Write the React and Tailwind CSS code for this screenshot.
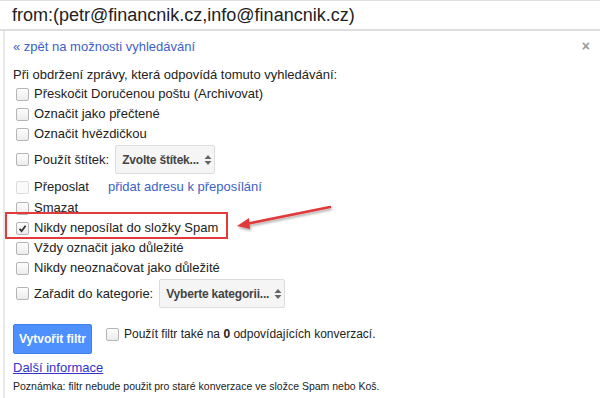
import React from "react";

function Box({ checked, disabled }) {
  return (
    <span
      className={`inline-flex w-[13px] h-[13px] shrink-0 items-center justify-center rounded-[2px] border ${
        disabled ? "border-[#dcdcdc] bg-[#fafafa]" : "border-[#b5b5b5] bg-gradient-to-b from-[#fdfdfd] to-[#ececec]"
      }`}
    >
      {checked && (
        <svg width="9" height="9" viewBox="0 0 9 9">
          <path d="M1.5 4.8 L3.6 7 L7.6 1.8" fill="none" stroke="#333" strokeWidth="1.8" />
        </svg>
      )}
    </span>
  );
}

function Row({ children, checked, disabled, className = "" }) {
  return (
    <div className={`flex items-center gap-[5px] whitespace-nowrap ${className}`}>
      <Box checked={checked} disabled={disabled} />
      {children}
    </div>
  );
}

function Select({ label, w }) {
  return (
    <span
      className={`inline-flex items-center justify-between gap-[5px] h-[29px] ${w} whitespace-nowrap rounded-[2px] border border-[#dcdcdc] bg-[#f5f5f5] pl-[6px] pr-[6px] text-[12px] font-bold text-[#444]`}
    >
      <span className="tracking-[-0.2px]">{label}</span>
      <svg width="8" height="12" viewBox="0 0 8 12" className="shrink-0">
        <path d="M0.5 5 L4 1 L7.5 5 Z" fill="#666" />
        <path d="M0.5 7 L4 11 L7.5 7 Z" fill="#666" />
      </svg>
    </span>
  );
}

export default function App() {
  return (
    <div
      className="relative w-[600px] h-[398px] bg-white overflow-hidden text-[#222]"
      style={{ fontFamily: '"Liberation Sans", Arial, sans-serif' }}
    >
      <div className="h-[31px] border-t border-b-2 border-[#dedede] flex items-center pl-[12px] text-[18px] text-[#222]">
        from:(petr@financnik.cz,info@financnik.cz)
      </div>
      <div className="ml-[3px] border-l-2 border-[#e8e8e8] h-[367px] pl-[8px] text-[13px] relative">
        <div className="flex items-center justify-between pt-[7px] h-[24px]">
          <span className="text-[#3d5fc6]">« zpět na možnosti vyhledávání</span>
          <span className="mr-[10px] text-[#999] text-[14px] font-bold">×</span>
        </div>
        <div className="mt-[12px] leading-[16px]">Při obdržení zprávy, která odpovídá tomuto vyhledávání:</div>
        <div className="mt-[1px] flex flex-col pl-[3px]">
          <Row className="h-[20px]">Přeskočit Doručenou poštu (Archivovat)</Row>
          <Row className="h-[20px]">Označit jako přečtené</Row>
          <Row className="h-[20px]">Označit hvězdičkou</Row>
          <Row className="h-[29px] mt-[1px]">
            Použít štítek:
            <span className="ml-[1px]">
              <Select label="Zvolte štítek..." w="w-[100px]" />
            </span>
          </Row>
          <Row disabled className="h-[20px] mt-[3px]">
            <span>Přeposlat</span>
            <span className="ml-[14px] text-[#3d5fc6]">přidat adresu k přeposílání</span>
          </Row>
          <Row className="h-[20px] mt-[1px]">Smazat</Row>
          <Row checked className="h-[20px]">Nikdy neposílat do složky Spam</Row>
          <Row className="h-[20px]">Vždy označit jako důležité</Row>
          <Row className="h-[20px]">Nikdy neoznačovat jako důležité</Row>
          <Row className="h-[29px] mt-[1px]">
            Zařadit do kategorie:
            <span className="ml-[1px]">
              <Select label="Vyberte kategorii..." w="w-[126px]" />
            </span>
          </Row>
        </div>
        <div className="mt-[16px] flex items-start gap-[14px]">
          <span className="inline-flex items-center justify-center h-[30px] w-[79px] rounded-[2px] bg-[#4d90fe] border border-[#3f7fe8] text-white text-[12px] font-bold">
            Vytvořit filtr
          </span>
          <span className="flex items-center gap-[5px] mt-[1px] text-[12px]">
            <Box />
            <span>
              Použít filtr také na <b className="font-bold">0</b> odpovídajících konverzací.
            </span>
          </span>
        </div>
        <div className="mt-[6px] text-[#3333cc] underline leading-[16px]">Další informace</div>
        <div className="mt-[3px] text-[10.5px] leading-[14px] text-[#222]">
          Poznámka: filtr nebude použit pro staré konverzace ve složce Spam nebo Koš.
        </div>
      </div>
      {/* annotation */}
      <div className="absolute left-[5px] top-[212px] w-[223px] h-[27px] border-[2px] border-[#e23b3b]" />
      <svg className="absolute left-0 top-0" width="600" height="398" viewBox="0 0 600 398">
        <defs>
          <filter id="sh" x="-10%" y="-50%" width="120%" height="200%">
            <feDropShadow dx="1" dy="2" stdDeviation="1" floodColor="#000" floodOpacity="0.3" />
          </filter>
        </defs>
        <g filter="url(#sh)">
          <line x1="330" y1="207" x2="246" y2="224" stroke="#e03a3a" strokeWidth="2.5" strokeLinecap="round" />
          <path d="M237 226 L249 218 L250 229 Z" fill="#e03a3a" />
        </g>
      </svg>
    </div>
  );
}
